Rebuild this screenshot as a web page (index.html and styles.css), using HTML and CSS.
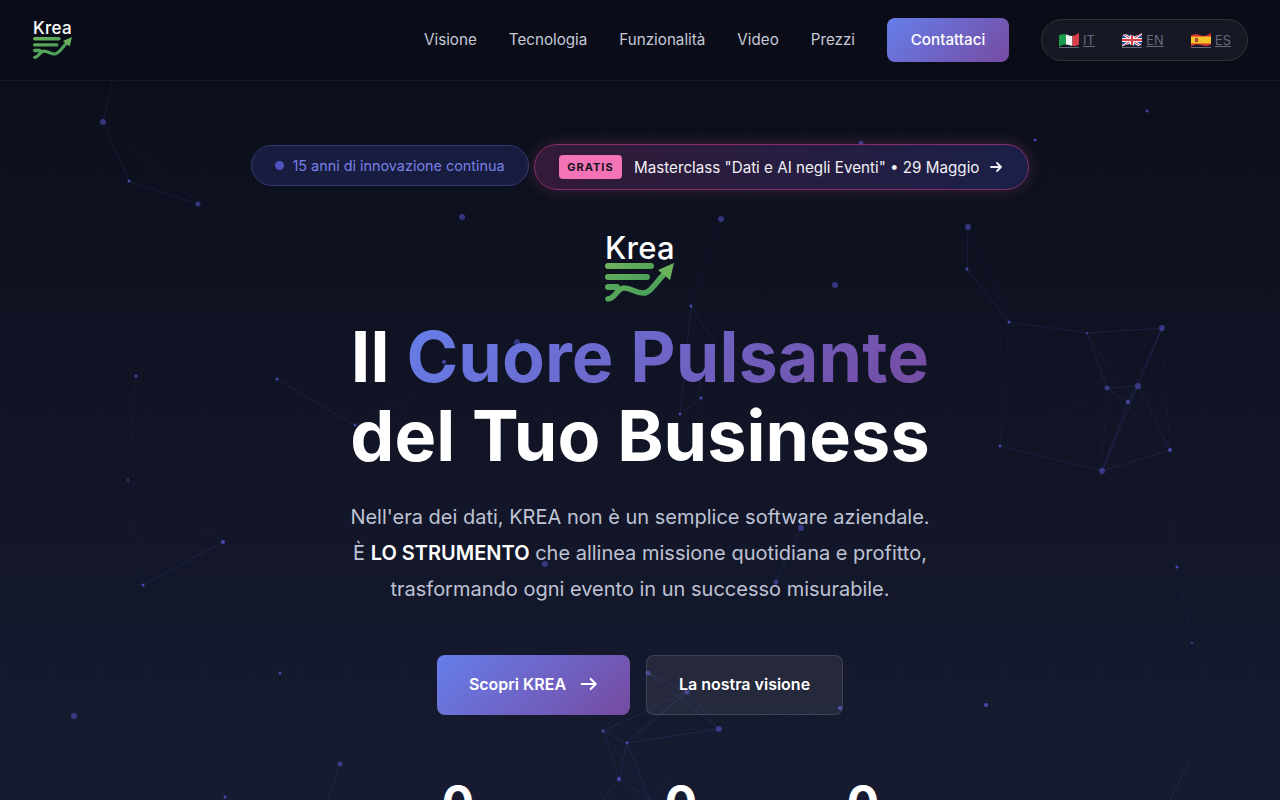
FILE: index.html
```html
<!DOCTYPE html>
<html lang="it">
<head>
  <meta charset="UTF-8">
  <meta name="viewport" content="width=device-width, initial-scale=1.0">
  <title>KREA — Il Cuore Pulsante del Tuo Business</title>
  <link rel="stylesheet" href="styles.css">
</head>
<body>
  <!-- particle network behind everything -->
  <svg class="particles" viewBox="0 0 1280 800" aria-hidden="true">
    <g class="links">
      <path d="M112 85L103 122L129 181L198 204"/>
      <path d="M968 227L967 269L1009 322L1087 333L1162 328"/>
      <path d="M1087 333L1107 388M1162 328L1128 402M1162 328L1138 386"/>
      <path d="M1107 388L1138 386L1128 402L1107 388M1138 386L1170 450M1128 402L1102 471M1138 386L1102 471M1000 446L1102 471L1170 450"/>
      <path d="M691 306L716 345M691 306L680 414L701 398"/>
      <path d="M143 585L223 542M277 379L355 425"/>
      <path d="M801 528L776 582M1189 763L1170 800M340 764L328 800"/>
      <path d="M648 673L687 692L719 729L627 743L603 731L619 779L627 743M603 731L687 692M627 743L687 692M648 673L719 729"/>
      <path d="M619 779L603 800M619 779L650 800M627 743L650 800"/>
    </g>
    <g class="links faint">
      <path d="M103 122L198 204M1035 140L1147 111M721 219L691 306M691 306L701 398"/>
      <path d="M968 227L1009 322M1009 322L1107 388M1009 322L1000 446M1087 333L1128 402M1087 333L1170 450M1162 328L1107 388M1162 328L1170 450M1107 388L1102 471M1107 388L1170 450M1000 446L1107 388"/>
      <path d="M1170 450L1177 567L1192 643M136 376L128 480L143 585M128 480L223 542M801 528L836 460"/>
      <path d="M687 692L619 779M648 673L603 731M719 729L650 800M687 692L603 760M603 731L648 673M603 731L719 729M719 729L619 779M840 708L719 729M603 731L650 800"/>
      <path d="M517 342L355 425M517 342L444 362"/>
    </g>
    <g class="nodes">
      <circle cx="103" cy="122" r="3"/><circle cx="198" cy="204" r="2.500"/>
      <circle cx="462" cy="217" r="3"/><circle cx="721" cy="219" r="3"/><circle cx="861" cy="143" r="2.500"/>
      <circle cx="968" cy="227" r="3"/><circle cx="1162" cy="328" r="3"/><circle cx="1138" cy="386" r="3"/>
      <circle cx="1107" cy="388" r="2.500"/><circle cx="1102" cy="471" r="3"/><circle cx="835" cy="285" r="3"/>
      <circle cx="801" cy="528" r="3"/><circle cx="545" cy="564" r="3"/><circle cx="776" cy="582" r="2.500"/>
      <circle cx="74" cy="716" r="3"/><circle cx="340" cy="764" r="2.500"/><circle cx="648" cy="673" r="2.500"/>
      <circle cx="687" cy="692" r="2.500"/><circle cx="719" cy="729" r="3"/><circle cx="517" cy="342" r="3"/>
    </g>
    <g class="nodes nodes-small">
      <circle cx="129" cy="181" r="1.500"/><circle cx="1035" cy="140" r="1.500"/><circle cx="1147" cy="111" r="1.500"/>
      <circle cx="967" cy="269" r="1.500"/><circle cx="1009" cy="322" r="1.500"/><circle cx="1087" cy="333" r="1"/>
      <circle cx="1128" cy="402" r="2"/><circle cx="1170" cy="450" r="2"/><circle cx="1000" cy="446" r="1.500"/>
      <circle cx="691" cy="306" r="1.500"/><circle cx="136" cy="376" r="1.500"/><circle cx="277" cy="379" r="1.500"/>
      <circle cx="128" cy="480" r="1"/><circle cx="143" cy="585" r="1.500"/><circle cx="223" cy="542" r="2"/>
      <circle cx="701" cy="398" r="1.500"/><circle cx="680" cy="414" r="1.500"/><circle cx="1177" cy="567" r="1.500"/>
      <circle cx="1192" cy="643" r="1"/><circle cx="280" cy="673" r="1.500"/><circle cx="225" cy="797" r="1.500"/>
      <circle cx="840" cy="708" r="2"/><circle cx="603" cy="731" r="1.500"/><circle cx="627" cy="743" r="1.500"/>
      <circle cx="619" cy="779" r="2"/><circle cx="986" cy="705" r="2"/><circle cx="444" cy="362" r="2"/>
      <circle cx="355" cy="425" r="1.500"/>
    </g>
  </svg>

  <svg class="svg-defs" aria-hidden="true">
    <defs>
      <linearGradient id="krea-green" x1="0" y1="0" x2="1" y2="1">
        <stop offset="0" stop-color="#6cb25d"/>
        <stop offset="1" stop-color="#3f9a58"/>
      </linearGradient>
      <g id="krea-mark" fill="none" stroke="url(#krea-green)" stroke-linecap="round">
        <path d="M3 3H46M3 14H42M3 24H12" stroke-width="6"/>
        <path d="M3 36C10 36 12 25 19 25C27 25 30 30 38 30C46 30 50 20 62 8" stroke-width="5.500"/>
        <path d="M53 7L69 0L65 17Z" fill="#6cb25d" stroke="none"/>
      </g>
      <clipPath id="flag-wave">
        <path d="M0 2.500C4 .5 7 1.500 10 2.500S16 2.500 20 0V11.500C16 14 13 13 10 12S4 11 0 13.500Z"/>
      </clipPath>
    </defs>
  </svg>

  <nav class="navbar">
    <a class="nav-logo" href="#">
      <span class="logo-word">Krea</span>
      <svg class="logo-mark" viewBox="0 0 69 40"><use href="#krea-mark"/></svg>
    </a>
    <div class="nav-right">
      <a class="nav-link" href="#">Visione</a>
      <a class="nav-link" href="#">Tecnologia</a>
      <a class="nav-link" href="#">Funzionalità</a>
      <a class="nav-link" href="#">Video</a>
      <a class="nav-link" href="#">Prezzi</a>
      <a class="nav-cta" href="#">Contattaci</a>
      <div class="lang-switch">
        <a class="lang" href="#">
          <svg class="flag" viewBox="0 0 20 14"><g clip-path="url(#flag-wave)"><rect width="7" height="14" fill="#1b9a4b"/><rect x="7" width="6.500" height="14" fill="#f4f4f4"/><rect x="13.500" width="6.500" height="14" fill="#d8404a"/></g></svg>
          <span>IT</span>
        </a>
        <a class="lang" href="#">
          <svg class="flag" viewBox="0 0 20 14"><g clip-path="url(#flag-wave)"><rect width="20" height="14" fill="#27408f"/><path d="M0 0L20 14M20 0L0 14" stroke="#eee" stroke-width="3"/><path d="M0 0L20 14M20 0L0 14" stroke="#d8404a" stroke-width="1"/><path d="M10 0V14M0 7H20" stroke="#eee" stroke-width="4"/><path d="M10 0V14M0 7H20" stroke="#d8404a" stroke-width="2"/></g></svg>
          <span>EN</span>
        </a>
        <a class="lang" href="#">
          <svg class="flag" viewBox="0 0 20 14"><g clip-path="url(#flag-wave)"><rect width="20" height="14" fill="#d3312f"/><rect y="3.500" width="20" height="7" fill="#f6c22c"/><rect x="4" y="5" width="3" height="4" fill="#a8443a"/></g></svg>
          <span>ES</span>
        </a>
      </div>
    </div>
  </nav>

  <main class="hero">
    <div class="badges">
      <div class="badge">
        <span class="badge-dot"></span>
        15 anni di innovazione continua
      </div>
      <a class="promo" href="#">
        <span class="promo-tag">GRATIS</span>
        <span>Masterclass "Dati e AI negli Eventi" • 29 Maggio</span>
        <svg class="arrow arrow-sm" viewBox="0 0 16 16"><path d="M3 8H13M9 4L13 8L9 12"/></svg>
      </a>
    </div>

    <div class="hero-logo">
      <span class="logo-word">Krea</span>
      <svg class="logo-mark" viewBox="0 0 69 40"><use href="#krea-mark"/></svg>
    </div>

    <h1 class="hero-title">Il <span class="gradient-text">Cuore Pulsante</span><br>del Tuo Business</h1>

    <p class="hero-text">
      Nell'era dei dati, KREA non è un semplice software aziendale.<br>
      È <strong>LO STRUMENTO</strong> che allinea missione quotidiana e profitto,<br>
      trasformando ogni evento in un successo misurabile.
    </p>

    <div class="hero-buttons">
      <a class="btn btn-primary" href="#">
        Scopri KREA
        <svg class="arrow" viewBox="0 0 16 16"><path d="M1.500 8H14M9.500 3.500L14 8L9.500 12.500"/></svg>
      </a>
      <a class="btn btn-secondary" href="#">La nostra visione</a>
    </div>

    <div class="stats">
      <div class="stat stat-a">0</div>
      <div class="stat stat-b">0</div>
      <div class="stat stat-c">0</div>
    </div>
  </main>
</body>
</html>
```

FILE: styles.css
```css
* { box-sizing: border-box; }
html, body { height: 100%; }
body {
  margin: 0;
  height: 800px;
  overflow: hidden;
  position: relative;
  font-family: 'Inter', sans-serif;
  color: #fff;
  background-color: #0a0e1a;
  background-image:
    linear-gradient(rgba(255, 255, 255, 0.004) 1px, transparent 1px),
    linear-gradient(90deg, rgba(255, 255, 255, 0.005) 1px, transparent 1px),
    linear-gradient(180deg, #0a0d18 0%, #171b31 100%);
  background-size: 50px 50px, 50px 50px, 100% 100%;
}
a { color: inherit; text-decoration: none; }

.particles {
  position: absolute;
  inset: 0;
  width: 1280px;
  height: 800px;
}
.svg-defs {
  position: absolute;
  width: 0;
  height: 0;
}
.links path {
  fill: none;
  stroke: rgba(99, 102, 241, 0.14);
  stroke-width: 1;
}
.links.faint path { stroke: rgba(99, 102, 241, 0.06); }
.nodes circle { fill: rgba(88, 90, 215, 0.5); }
.nodes-small circle { fill: rgba(88, 90, 215, 0.75); }

/* nav */
.navbar {
  position: relative;
  height: 81px;
  padding: 0 32px 0 33px;
  display: flex;
  align-items: center;
  justify-content: space-between;
  background: rgba(10, 13, 24, 0.9);
  border-bottom: 1px solid rgba(255, 255, 255, 0.05);
}
.nav-logo {
  width: 40px;
  display: flex;
  flex-direction: column;
  align-items: flex-start;
}
.nav-logo .logo-word {
  font-size: 17px;
  line-height: 17px;
  letter-spacing: 0.3px;
}
.nav-logo .logo-mark {
  width: 39px;
  height: 22.600px;
}
.logo-word {
  font-family: 'Inter', sans-serif;
  font-weight: 500;
  color: #fff;
}
.logo-mark { display: block; }
.nav-right {
  display: flex;
  align-items: center;
  gap: 32px;
}
.nav-link {
  font-size: 15.200px;
  color: #c6c9d6;
  padding-bottom: 2px;
}
.nav-cta {
  width: 122px;
  height: 44px;
  display: flex;
  align-items: center;
  justify-content: center;
  font-size: 15.200px;
  font-weight: 500;
  padding-bottom: 1px;
  border-radius: 8px;
  background: linear-gradient(135deg, #667eea, #764ba2);
}
.lang-switch {
  width: 207px;
  height: 42px;
  padding: 0 16px 0 17px;
  display: flex;
  align-items: center;
  justify-content: space-between;
  background: rgba(255, 255, 255, 0.05);
  border: 1px solid rgba(255, 255, 255, 0.1);
  border-radius: 21px;
}
.lang {
  display: flex;
  align-items: center;
  gap: 4px;
  font-size: 12.800px;
  color: #656a7d;
}
.lang span { text-decoration: underline; }
.flag {
  width: 20px;
  height: 15px;
  border-bottom: 1px solid #656a7d;
}

/* hero */
.hero {
  position: relative;
  display: flex;
  flex-direction: column;
  align-items: center;
}
.badges {
  margin-top: 63px;
  display: flex;
  align-items: flex-start;
  gap: 5px;
}
.badge {
  width: 278px;
  height: 41px;
  margin-top: 1px;
  display: flex;
  align-items: center;
  justify-content: center;
  gap: 8px;
  font-size: 14.400px;
  color: #7780e6;
  background: #181c3e;
  border: 1px solid #33386f;
  border-radius: 21px;
}
.badge-dot {
  width: 9px;
  height: 9px;
  border-radius: 50%;
  background: #4f51c0;
}
.promo {
  width: 495px;
  height: 46px;
  padding-left: 24px;
  display: flex;
  align-items: center;
  gap: 12px;
  font-size: 15.200px;
  color: #f0f0f5;
  border-radius: 23px;
  border: 1px solid #8a2f6c;
  background: linear-gradient(90deg, #331a38, #1b2048);
  box-shadow: 0 0 16px rgba(244, 114, 182, 0.2);
}
.promo-tag {
  height: 24px;
  width: 63px;
  display: flex;
  align-items: center;
  justify-content: center;
  font-size: 11px;
  font-weight: 700;
  letter-spacing: 1px;
  color: #12121c;
  background: #f472b6;
  border-radius: 4px;
}
.arrow {
  width: 18px;
  height: 18px;
  fill: none;
  stroke: currentColor;
  stroke-width: 1.800;
  stroke-linecap: round;
  stroke-linejoin: round;
}
.arrow-sm {
  width: 16px;
  height: 16px;
  margin-left: -3px;
}

.hero-logo {
  width: 70px;
  margin-top: 42px;
  display: flex;
  flex-direction: column;
}
.hero-logo .logo-word {
  font-size: 31px;
  line-height: 31px;
  letter-spacing: 0.3px;
}
.hero-logo .logo-mark {
  width: 69px;
  height: 40px;
}
.hero-title {
  margin: 14px 0 0;
  font-size: 70px;
  font-weight: 700;
  line-height: 79px;
  text-align: center;
  letter-spacing: 0.1px;
}
.gradient-text {
  background: linear-gradient(135deg, #667eea, #764ba2);
  -webkit-background-clip: text;
  background-clip: text;
  color: transparent;
}
.hero-text {
  margin: 24px 0 0;
  font-size: 20px;
  line-height: 36px;
  text-align: center;
  color: #bfc3d4;
}
.hero-text strong {
  color: #fff;
  font-weight: 600;
}
.hero-buttons {
  margin-top: 48px;
  display: flex;
  gap: 16px;
}
.btn {
  height: 60px;
  padding-bottom: 2px;
  display: flex;
  align-items: center;
  justify-content: center;
  gap: 14px;
  font-size: 16px;
  font-weight: 600;
  border-radius: 8px;
}
.btn-primary {
  width: 193px;
  background: linear-gradient(135deg, #667eea, #764ba2);
}
.btn-secondary {
  width: 197px;
  background: rgba(255, 255, 255, 0.07);
  border: 1px solid rgba(255, 255, 255, 0.12);
}
.stats {
  margin-top: 54px;
  display: flex;
  gap: 48px;
}
.stat {
  font-size: 48px;
  line-height: 68px;
  font-weight: 700;
  text-align: center;
}
.stat-a { width: 182px; }
.stat-b { width: 168px; }
.stat-c { width: 100px; }
```
